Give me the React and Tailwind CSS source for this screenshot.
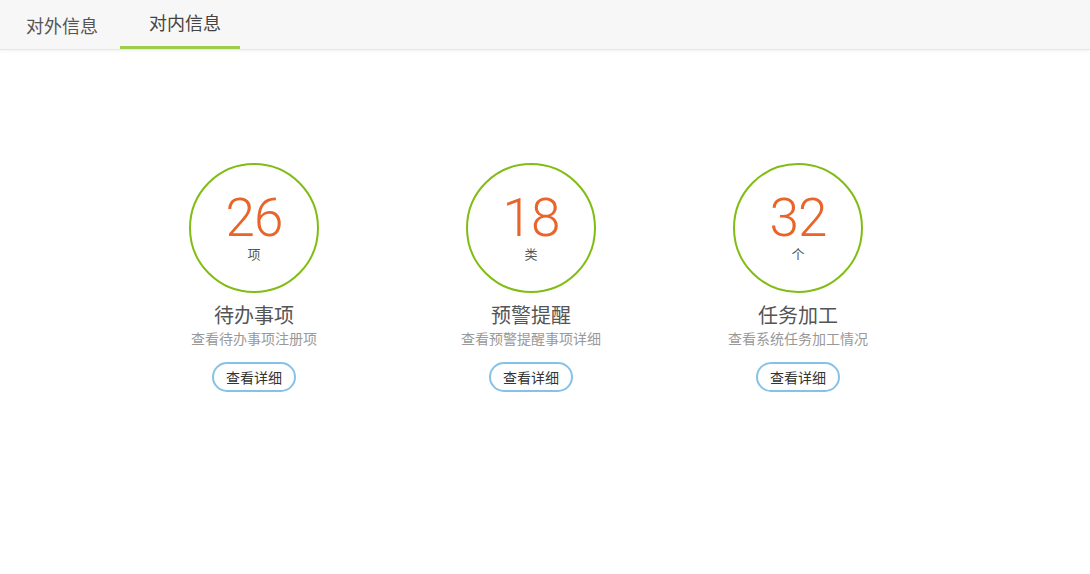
const items = [
  { num: '26', unit: '项', title: '待办事项', desc: '查看待办事项注册项', ml: 'ml-0' },
  { num: '18', unit: '类', title: '预警提醒', desc: '查看预警提醒事项详细', ml: 'ml-[147px]' },
  { num: '32', unit: '个', title: '任务加工', desc: '查看系统任务加工情况', ml: 'ml-[137px]' },
]

const font = { fontFamily: '"Noto Sans CJK SC", "Liberation Sans", sans-serif' }

export default function App() {
  return (
    <div className="h-[574px] w-[1090px] bg-white font-['Roboto','Noto_Sans_CJK_SC',sans-serif]">
      <div className="flex h-[50px] items-stretch border-b border-[#e6e6e6] bg-[#f7f7f7] shadow-[0_1px_3px_rgba(0,0,0,0.06)]">
        <div className="flex w-[120px] items-center pl-[26px] pt-[1px] text-[18px] text-[#555] font-['Noto_Sans_CJK_SC',sans-serif]">
          对外信息
        </div>
        <div className="flex w-[120px] flex-col justify-between text-[18px] text-[#444] font-['Noto_Sans_CJK_SC',sans-serif]">
          <span className="pl-[29px] pt-[9px]">对内信息</span>
          <span className="h-[3px] w-full bg-[#9fcd4c]" />
        </div>
      </div>

      <div className="flex pl-[189px] pt-[113px]">
        {items.map((it) => (
          <div key={it.num} className={`flex w-[130px] flex-col items-center ${it.ml}`}>
            <div className="flex h-[130px] w-[130px] flex-col items-center rounded-full border-2 border-[#80bd14]">
              <span className="mt-[27px] text-[53px] leading-[52px] font-light tracking-[-1px] text-[#e8642a]">{it.num}</span>
              <span className="mt-[1px] text-[13px] leading-[18px] text-[#555]" style={font}>{it.unit}</span>
            </div>
            <div className="mt-[9px] whitespace-nowrap text-[20px] leading-[26px] text-[#555]" style={font}>{it.title}</div>
            <div className="mt-[0px] whitespace-nowrap text-[14px] leading-[20px] text-[#999]" style={font}>{it.desc}</div>
            <button className="mt-[14px] flex h-[30px] w-[84px] items-center justify-center rounded-full border-2 border-[#86c2e6] text-[14px] text-[#333]" style={font}>
              查看详细
            </button>
          </div>
        ))}
      </div>
    </div>
  )
}
